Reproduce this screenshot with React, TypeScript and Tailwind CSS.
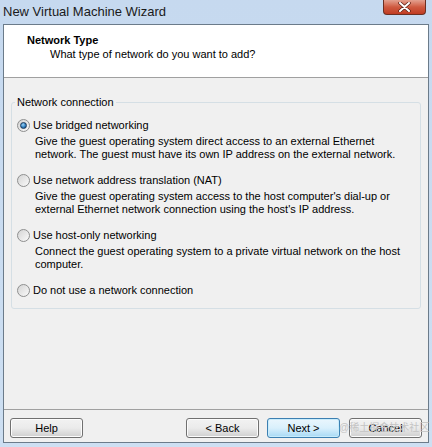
import { ReactNode } from 'react';

const font = "font-['Tahoma','Liberation_Sans','Noto_Sans_CJK_SC',sans-serif]";

const Radio = ({ checked }: { checked?: boolean }) => (
  <span className="w-[13px] h-[13px] shrink-0 rounded-full border border-[#8e8f8f] bg-gradient-to-br from-[#d4d4d4] to-[#fafafa] flex items-center justify-center">
    {checked && (
      <span className="w-[7px] h-[7px] rounded-full border border-[#1b3a5c] bg-[radial-gradient(circle_at_40%_35%,#9fd4f5_0%,#2f7fc0_55%,#0f3e6e_100%)]" />
    )}
  </span>
);

const Option = ({ label, checked, children }: { label: string; checked?: boolean; children?: ReactNode }) => (
  <div className="mb-[12px] last:mb-0">
    <div className="flex items-center gap-[3px] h-[14px]">
      <Radio checked={checked} />
      <span>{label}</span>
    </div>
    {children && <div className="ml-[18px] mt-[3px] leading-[13px]">{children}</div>}
  </div>
);

const Button = ({ children, primary, className }: { children: ReactNode; primary?: boolean; className?: string }) => (
  <button
    className={
      'h-[20px] w-[73px] rounded-[3px] border text-[11px] text-black flex items-center justify-center ' +
      (primary
        ? 'border-[#3c7fb1] bg-gradient-to-b from-[#eaf6fd] via-[#d9f0fc] to-[#a7d9f5] shadow-[inset_0_0_0_1px_#c8ecfc] '
        : 'border-[#707070] bg-gradient-to-b from-[#f2f2f2] via-[#ebebeb] to-[#cfcfcf] shadow-[inset_0_0_0_1px_#fcfcfc] ') +
      (className || '')
    }
  >
    {children}
  </button>
);

export default function App() {
  return (
    <div className={`w-[432px] h-[447px] bg-gradient-to-b from-[#c6d9ef] to-[#cddff2] flex flex-col text-[11px] text-black ${font}`}>
      {/* Title bar */}
      <div className="h-[24px] flex items-start justify-between shrink-0">
        <span className="pl-[3px] pt-[2px] text-[13px] text-[#1a1a1a] font-['Liberation_Sans',sans-serif]">New Virtual Machine Wizard</span>
        <div className="mr-[6px] w-[43px] h-[15px] rounded-b-[4px] border border-t-0 border-[#6b2f22] bg-gradient-to-b from-[#e3a08f] via-[#cf5a40] to-[#c03b22] flex items-center justify-center">
          <svg width="13" height="10" viewBox="0 0 13 10">
            <path d="M2 1 L11 9 M11 1 L2 9" stroke="#5a1f14" strokeWidth="3.4" strokeLinecap="round" />
            <path d="M2 1 L11 9 M11 1 L2 9" stroke="#ffffff" strokeWidth="2" strokeLinecap="round" />
          </svg>
        </div>
      </div>

      {/* Client area */}
      <div className="mx-[3px] flex-1 mb-[4px] border border-[#6b7b8a] bg-[#f0f0f0] flex flex-col">
        <div className="h-[53px] bg-white border-b border-[#a0a0a0] pl-[23px] pt-[8px] shrink-0">
          <div className="font-bold leading-[14px]">Network Type</div>
          <div className="ml-[23px] leading-[14px]">What type of network do you want to add?</div>
        </div>

        <div className="flex-1 px-[7px] pt-[18px]">
          <fieldset className="border border-[#d5dfe5] rounded-[3px] pl-[5px] pb-[12px] h-[213px]">
            <legend className="-ml-[2px] px-[2px] leading-[13px]">Network connection</legend>
            <div className="pt-[9px]">
              <Option label="Use bridged networking" checked>
                Give the guest operating system direct access to an external Ethernet
                <br />
                network. The guest must have its own IP address on the external network.
              </Option>
              <Option label="Use network address translation (NAT)">
                Give the guest operating system access to the host computer's dial-up or
                <br />
                external Ethernet network connection using the host's IP address.
              </Option>
              <Option label="Use host-only networking">
                Connect the guest operating system to a private virtual network on the host
                <br />
                computer.
              </Option>
              <Option label="Do not use a network connection" />
            </div>
          </fieldset>
        </div>

        <div className="h-[33px] border-t border-[#a0a0a0] shrink-0 flex items-start pt-[8px] px-[6px]">
          <Button>Help</Button>
          <div className="flex-1" />
          <Button>&lt; Back</Button>
          <Button primary className="ml-[8px]">Next &gt;</Button>
          <div className="relative ml-[9px]">
            <Button className="border-[#9a9a9a]">Cancel</Button>
            <span className="absolute left-[-10px] top-[4px] text-[10px] leading-[12px] text-[#c4c4c4] whitespace-nowrap pointer-events-none">
              @稀土掘金技术社区
            </span>
          </div>
        </div>
      </div>
    </div>
  );
}
